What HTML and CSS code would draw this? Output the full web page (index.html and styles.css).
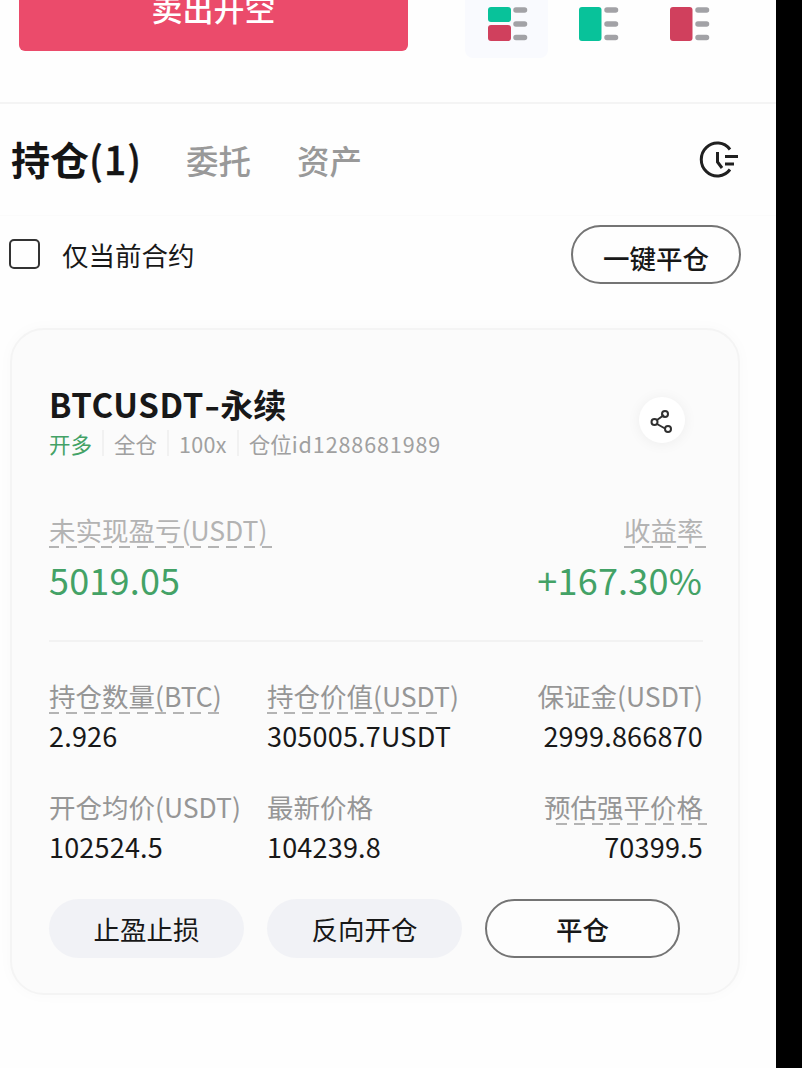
FILE: index.html
```html
<!DOCTYPE html>
<html lang="zh-CN">
<head>
<meta charset="utf-8">
<title>持仓</title>
<link rel="stylesheet" href="styles.css">
</head>
<body>
<main class="screen">
  <section class="trade">
    <button class="sell"><span class="sell-text">卖出开空</span></button>
    <div class="modes">
      <div class="mode mode-active"><svg width="40" height="36" viewBox="0 0 40 36"><rect y="1" width="23" height="15" rx="3" fill="#08c29a"/><rect y="19" width="23" height="16" rx="3" fill="#d0405d"/><path d="M28 4h8.500M28 18h8.500M28 31.500h8.500" class="dash"/></svg></div>
      <div class="mode"><svg width="40" height="36" viewBox="0 0 40 36"><rect y="1" width="22.500" height="34" rx="3" fill="#08c29a"/><path d="M28 4h8.500M28 18h8.500M28 31.500h8.500" class="dash"/></svg></div>
      <div class="mode"><svg width="40" height="36" viewBox="0 0 40 36"><rect y="1" width="22.500" height="34" rx="3" fill="#d0405d"/><path d="M28 4h8.500M28 18h8.500M28 31.500h8.500" class="dash"/></svg></div>
    </div>
  </section>
  <nav class="tabs">
    <span class="tab tab-on">持仓<span class="count">(1)</span></span>
    <span class="tab tab-orders">委托</span>
    <span class="tab">资产</span>
    <svg class="history" width="40" height="38" viewBox="0 0 40 38"><path d="M31 8.500A16 16.500 0 1 0 31 28.500" class="ink"/><path d="M18.500 11v10l4.500 6" class="ink"/><path d="M26 15.500h13M26 23h9" class="ink"/></svg>
  </nav>
  <section class="filter">
    <span class="check"></span>
    <span class="check-label">仅当前合约</span>
    <button class="pill close-all">一键平仓</button>
  </section>
  <article class="card">
    <header class="head">
      <div>
        <h2 class="title"><span class="pair">BTCUSDT</span><span class="hyphen">-</span>永续</h2>
        <div class="meta"><span class="green">开多</span><i></i><span>全仓</span><i></i><span class="lever">100x</span><i></i><span>仓位<span class="pid">id1288681989</span></span></div>
      </div>
      <div class="share"><svg width="24" height="26" viewBox="0 0 24 26"><path d="M7 11l7-5M7 15l8 4.500" class="thin"/><circle cx="4.500" cy="13" r="3" class="thin"/><circle cx="15" cy="5" r="3" class="thin"/><circle cx="18" cy="20" r="3" class="thin"/></svg></div>
    </header>
    <div class="profit">
      <div class="cell"><span class="label u u-pnl">未实现盈亏(USDT)</span><strong class="big">5019.05</strong></div>
      <div class="cell end"><span class="label u u-rate">收益率</span><strong class="big rate">+167.30%</strong></div>
    </div>
    <div class="grid">
      <div class="cell"><span class="label u u-qty">持仓数量(BTC)</span><span class="value">2.926</span></div>
      <div class="cell"><span class="label u u-val">持仓价值(USDT)</span><span class="value">305005.7USDT</span></div>
      <div class="cell end"><span class="label">保证金(USDT)</span><span class="value">2999.866870</span></div>
      <div class="cell"><span class="label">开仓均价(USDT)</span><span class="value">102524.5</span></div>
      <div class="cell"><span class="label">最新价格</span><span class="value">104239.8</span></div>
      <div class="cell end"><span class="label u u-liq">预估强平价格</span><span class="value">70399.5</span></div>
    </div>
    <footer class="actions">
      <button class="pill soft">止盈止损</button>
      <button class="pill soft">反向开仓</button>
      <button class="pill strong">平仓</button>
    </footer>
  </article>
</main>
</body>
</html>
```
FILE: styles.css
```css
* { box-sizing: border-box; }
body { margin: 0; background: #000; font-family: "Noto Sans CJK SC", sans-serif; color: #181818; }
button { font: inherit; color: inherit; padding: 0; border: 0; }
svg { display: block; overflow: visible; }
.screen { width: 776px; height: 1068px; background: #fefefe; overflow: hidden; }
.trade { height: 104px; display: flex; align-items: flex-start; border-bottom: 2px solid #f4f4f4; }
.sell { width: 389px; height: 51px; margin-left: 19px; background: #eb4b6b; border-radius: 0 0 6px 6px; color: #fff; display: flex; justify-content: center; align-items: flex-start; }
.sell-text { font-size: 31px; line-height: 16px; font-weight: 500; }
.modes { display: flex; margin-left: 57px; gap: 8px; }
.mode { width: 83px; height: 58px; padding: 6px 0 0 23px; }
.mode-active { background: #f9fafe; border-radius: 0 0 8px 8px; }
.dash { stroke: #a2a2a6; stroke-width: 5.500; stroke-linecap: round; fill: none; }
.tabs { height: 112px; padding-left: 11px; display: flex; align-items: center; border-bottom: 1px solid #fbfbfb; }
.tab { font-size: 32.500px; line-height: 50px; font-weight: 500; color: #999; }
.tab-on { font-size: 39px; font-weight: 700; color: #151515; width: 175px; padding-bottom: 4px; }
.count { font-weight: 500; letter-spacing: 1px; -webkit-text-stroke: .4px currentColor; }
.tab-orders { width: 111px; }
.history { margin-left: auto; margin-right: 37px; }
.ink { fill: none; stroke: #202020; stroke-width: 3; }
.thin { fill: none; stroke: #303030; stroke-width: 2; }
.filter { height: 78px; padding: 0 35px 2px 9px; display: flex; align-items: center; }
.check { width: 31px; height: 30px; border: 2px solid #333; border-radius: 5px; }
.check-label { font-size: 26.500px; line-height: 40px; margin: 2px 0 0 22px; }
.pill { height: 59px; border-radius: 30px; font-size: 26.500px; line-height: 55px; text-align: center; }
.close-all { width: 170px; margin-left: auto; border: 2px solid #747474; background: #fefefe; font-weight: 500; padding-top: 5px; line-height: 51px; }
.card { width: 730px; height: 667px; margin: 34px 0 0 10px; padding: 50px 35px 0 37px; border: 2px solid #f4f4f4; border-radius: 34px; background: #fbfbfb; box-shadow: 0 0 16px rgba(0,0,0,.025); }
.head { display: flex; justify-content: space-between; height: 130px; }
.title { margin: 0; font-size: 33px; line-height: 48px; font-weight: 700; white-space: nowrap; }
.pair { letter-spacing: .7px; }
.hyphen { display: inline-block; margin: 0 2px; transform: scaleX(1.3); }
.meta { display: flex; align-items: center; height: 30px; font-size: 21.500px; color: #a0a0a0; }
.meta i { width: 2px; height: 26px; margin: 0 10px; background: #f1f1f1; }
.green { color: #43a266; }
.lever { letter-spacing: .3px; }
.pid { letter-spacing: .9px; }
.share { width: 46px; height: 46px; margin: 17px 18px 0 0; padding-top: 3px; border-radius: 50%; background: #fff; box-shadow: 0 1px 14px rgba(0,0,0,.06); display: flex; align-items: center; justify-content: center; }
.profit { display: flex; justify-content: space-between; height: 132px; border-bottom: 2px solid #f2f2f2; }
.cell { display: flex; flex-direction: column; align-items: flex-start; white-space: nowrap; }
.end { align-items: flex-end; }
.label { font-size: 26.500px; line-height: 40px; height: 40px; color: #969696; }
.profit .label { color: #b3b3b3; height: 45px; }
.big { font-size: 36px; line-height: 48px; font-weight: 400; color: #43a266; letter-spacing: .2px; }
.rate { margin-right: 1px; }
.value { font-size: 27px; line-height: 40px; letter-spacing: .2px; }
.u { background: repeating-linear-gradient(90deg, #b4b4b4 0 11px, transparent 11px 17.800px) no-repeat -1px 36px / 100% 2px; }
.u-pnl { width: 224px; }
.u-rate { width: 82px; margin-right: -3px; background-position: 0 36px; }
.u-qty { width: 172px; }
.u-val { background-size: 173px 2px; }
.u-liq { background-position: 12px 36px; padding-right: 4px; margin-right: -4px; }
.grid { display: grid; grid-template-columns: 218px 218px 1fr; grid-template-rows: 111px 112px; padding-top: 34px; }
.actions { display: flex; gap: 23px; }
.actions .pill { width: 195px; }
.soft { background: #f1f2f6; }
.strong { border: 2px solid #747474; background: #fdfdfd; font-weight: 500; }
```
